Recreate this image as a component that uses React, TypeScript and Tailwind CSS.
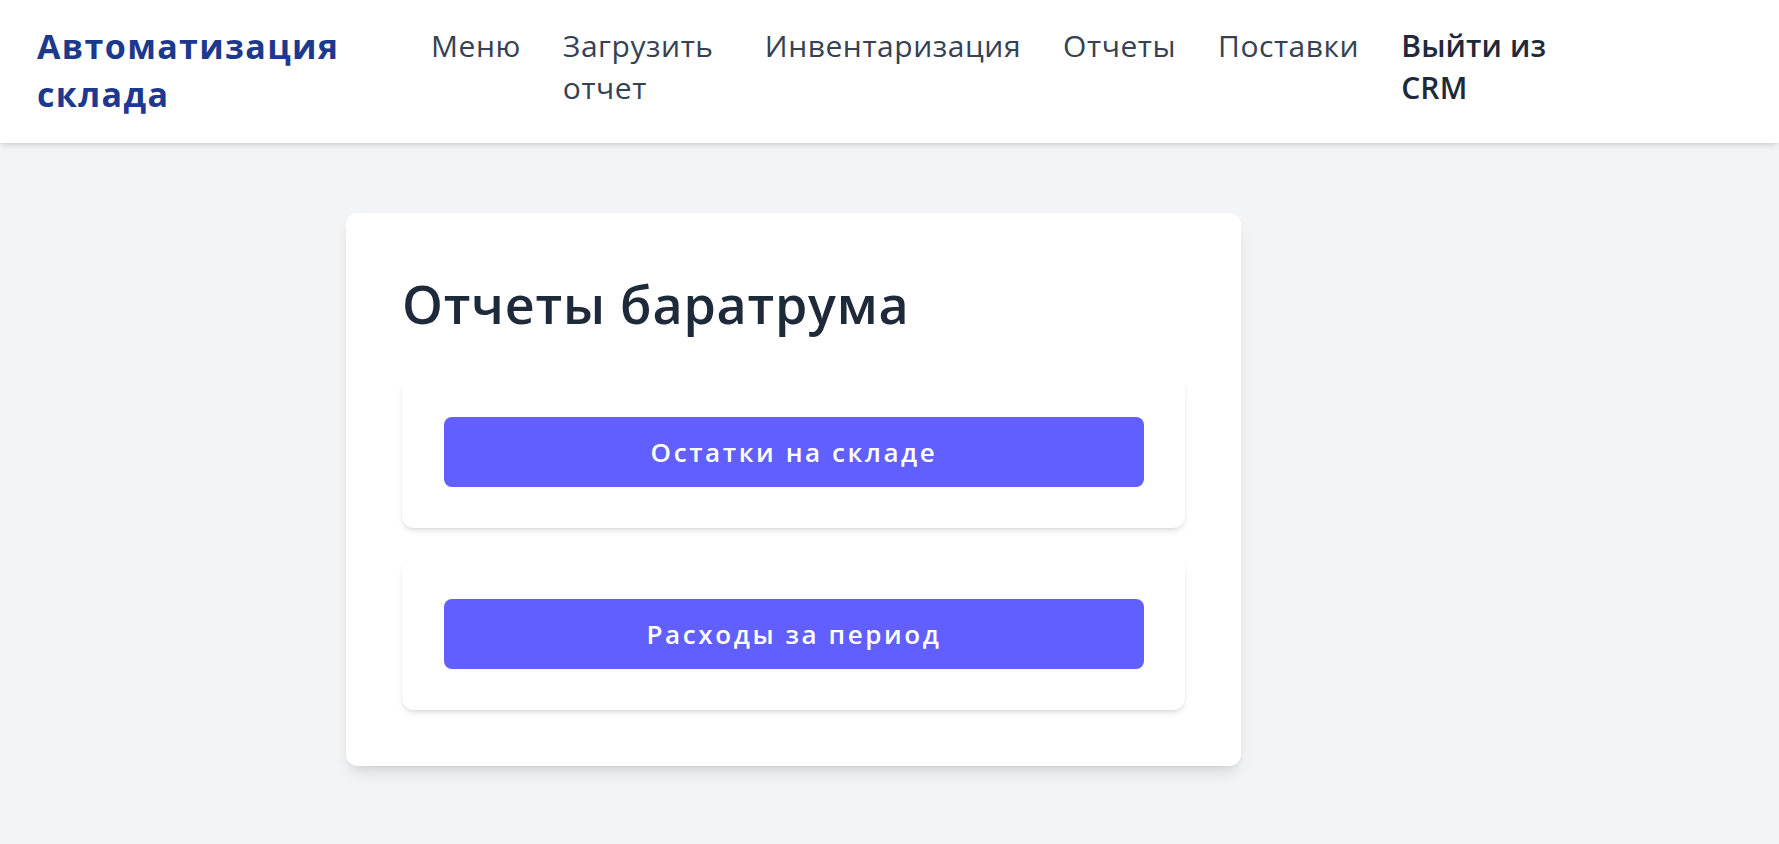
import React from "react";

const font = { fontFamily: '"Open Sans", "Noto Sans", sans-serif' };

export default function App() {
  return (
    <div className="min-h-screen bg-gray-100" style={font}>
      <header className="h-[143px] bg-white shadow-md flex items-start px-[37px] pt-[22px]">
        <div className="w-[394px] shrink-0 pr-[60px]">
          <div className="text-[34px] leading-[48px] font-bold text-blue-900 tracking-[0.04em]">
            Автоматизация склада
          </div>
        </div>
        <nav className="flex items-start gap-[42px] pt-[3px] text-[30px] leading-[42px] text-gray-700 tracking-[0.018em]">
          <a className="shrink-0">Меню</a>
          <a className="w-[160px] shrink-0">Загрузить отчет</a>
          <a className="shrink-0">Инвентаризация</a>
          <a className="shrink-0">Отчеты</a>
          <a className="shrink-0">Поставки</a>
          <a className="w-[150px] shrink-0 font-semibold text-gray-800 tracking-[0.005em]">Выйти из CRM</a>
        </nav>
      </header>
      <main className="pt-[70px]">
        <div className="mx-auto w-[1087px]">
          <div className="w-[895px] bg-white rounded-xl shadow-lg p-14">
            <h1 className="text-[52px] leading-[70px] font-semibold text-gray-800 tracking-[0.015em] mb-[38px]">
              Отчеты баратрума
            </h1>
            <div className="flex flex-col gap-[31px]">
              {["Остатки на складе", "Расходы за период"].map((t) => (
                <div key={t} className="bg-white rounded-xl shadow-md pt-10 pb-[41px] pl-[42px]">
                  <button className="w-[700px] h-[70px] rounded-lg bg-indigo-500 text-white text-[26px] font-semibold tracking-[0.1em]">
                    {t}
                  </button>
                </div>
              ))}
            </div>
          </div>
        </div>
      </main>
    </div>
  );
}
